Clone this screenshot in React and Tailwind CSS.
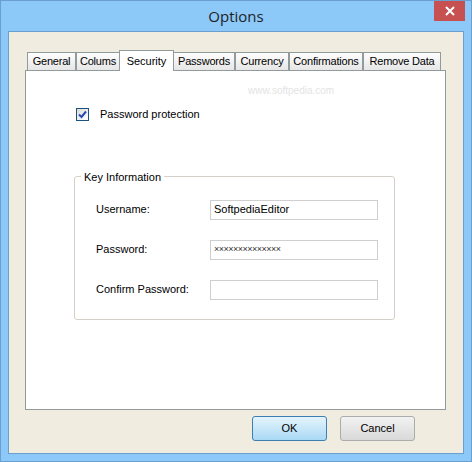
import React from "react"

const tabs = [
  ["General", "w-[49px]"],
  ["Colums", "w-[44px]"],
  ["Security", "w-[55px]"],
  ["Passwords", "w-[62px]"],
  ["Currency", "w-[54px]"],
  ["Confirmations", "w-[74px]"],
  ["Remove Data", "w-[78px]"],
]

function Field({ label, value, mono }) {
  return (
    <div className="flex items-center h-[20px]">
      <div className="w-[114px] text-[11px] text-black">{label}</div>
      <div className="w-[168px] h-[20px] border border-[#cfcfcf] bg-white px-[3px] flex items-center">
        <span className={mono ? "text-[9px] tracking-[-0.5px] text-[#333]" : "text-[11px] text-black"}>{value}</span>
      </div>
    </div>
  )
}

export default function App() {
  return (
    <div className="w-[472px] h-[462px] bg-[#8cc8f8] border border-[#6a9fd0] flex flex-col" style={{ fontFamily: '"Liberation Sans", Arial, sans-serif' }}>
      <div className="h-[30px] flex relative">
        <div className="flex-1 flex items-center justify-center text-[15px] text-[#1e1e1e]" style={{ fontFamily: '"Open Sans", "Noto Sans", sans-serif' }}>Options</div>
        <div className="absolute right-[6px] top-0 w-[31px] h-[20px] bg-[#c75050] flex items-center justify-center">
          <svg width="10" height="10" viewBox="0 0 10 10"><path d="M1 1L9 9M9 1L1 9" stroke="white" strokeWidth="2" /></svg>
        </div>
      </div>
      <div className="mx-[7px] mb-[7px] flex-1 bg-[#f0ede0] border border-[#6a9fd0] flex flex-col pl-[16px] pr-[17px]">
        <div className="flex items-end h-[38px] pl-[2px]">
          {tabs.map(([t, w]) =>
            t === "Security" ? (
              <div key={t} className={`${w} h-[21px] bg-white border border-b-0 border-[#919b9c] flex justify-center items-start pt-[2px] text-[11px] whitespace-nowrap -mx-[1px] relative z-10 mb-[-1px]`}>{t}</div>
            ) : (
              <div key={t} className={`${w} h-[18px] border border-[#919b9c] border-b-0 flex justify-center items-center text-[11px] tracking-[-0.2px] whitespace-nowrap bg-gradient-to-b from-[#fefefe] to-[#e6e6e6]`}>{t}</div>
            )
          )}
        </div>
        <div className="h-[340px] bg-white border border-[#919b9c] relative flex flex-col">
          <div className="absolute left-[222px] top-[12px] text-[10px] text-[#e4e4e4]">www.softpedia.com</div>
          <div className="flex items-center mt-[35px] ml-[50px] gap-[11px]">
            <div className="w-[13px] h-[13px] border border-[#1c5180] bg-gradient-to-br from-[#dcdcd6] to-[#ffffff] flex items-center justify-center">
              <svg width="9" height="9" viewBox="0 0 9 9"><path d="M1 4.5L3.5 7L8 1.5" fill="none" strokeWidth="2" stroke="#2b47b8" /></svg>
            </div>
            <span className="text-[11px]">Password protection</span>
          </div>
          <div className="mt-[53px] ml-[48px] w-[321px] h-[144px] border border-[#d5d0c8] rounded-[3px] relative">
            <div className="absolute -top-[8px] left-[6px] bg-white px-[3px] text-[11px]">Key Information</div>
            <div className="flex flex-col gap-[20px] mt-[23px] ml-[21px]">
              <Field label="Username:" value="SoftpediaEditor" />
              <Field label="Password:" value="××××××××××××××" mono />
              <Field label="Confirm Password:" value="" />
            </div>
          </div>
        </div>
        <div className="flex justify-end gap-[13px] mt-[6px] mr-[31px]">
          <div className="w-[75px] h-[25px] rounded-[3px] border border-[#3c7fb1] bg-gradient-to-b from-[#e5f4fc] to-[#a9d9f4] flex items-center justify-center text-[11px]">OK</div>
          <div className="w-[75px] h-[25px] rounded-[3px] border border-[#acacac] bg-gradient-to-b from-[#f2f2f2] to-[#d9d9d9] flex items-center justify-center text-[11px]">Cancel</div>
        </div>
      </div>
    </div>
  )
}
